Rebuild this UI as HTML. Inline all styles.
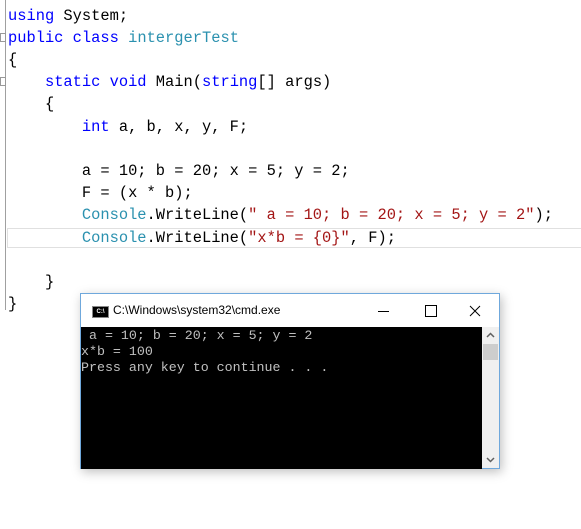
<!DOCTYPE html>
<html><head><style>
body{margin:0;width:581px;height:529px;background:#fff;position:relative;overflow:hidden;font-family:"Liberation Mono",monospace}
.l{position:absolute;left:8px;font-size:15.4px;white-space:pre;color:#000;line-height:22px;height:22px}
.k{color:#0000ff}.t{color:#2b91af}.s{color:#a31515}
.cmd{position:absolute;left:80px;top:293px;width:418px;height:174px;background:#fff;border:1px solid #6fa8dc;box-shadow:2px 3px 10px rgba(0,0,0,.25)}
.con{position:absolute;left:0;top:33px;width:401px;height:141px;background:#000;color:#c0c0c0;font-size:13.3px;line-height:16px;white-space:pre;padding-top:1px}
</style></head><body>
<div style="position:absolute;left:5px;top:0;width:1px;height:310px;background:#a0a0a0"></div>
<div style="position:absolute;left:0;top:33px;width:6px;height:9px;border:1px solid #999;background:#fff;box-sizing:border-box"></div>
<div style="position:absolute;left:0;top:77px;width:6px;height:9px;border:1px solid #999;background:#fff;box-sizing:border-box"></div>
<div style="position:absolute;left:7px;top:228px;width:580px;height:20px;border:1px solid #e0e0e0;box-sizing:border-box"></div>
<div class="l" style="top:-17px;color:#008000">//</div>
<div class="l" style="top:5px"><span class="k">using</span> System;</div>
<div class="l" style="top:27px"><span class="k">public class</span> <span class="t">intergerTest</span></div>
<div class="l" style="top:49px">{</div>
<div class="l" style="top:71px">    <span class="k">static void</span> Main(<span class="k">string</span>[] args)</div>
<div class="l" style="top:93px">    {</div>
<div class="l" style="top:116px">        <span class="k">int</span> a, b, x, y, F;</div>
<div class="l" style="top:160px">        a = 10; b = 20; x = 5; y = 2;</div>
<div class="l" style="top:182px">        F = (x * b);</div>
<div class="l" style="top:204px">        <span class="t">Console</span>.WriteLine(<span class="s">" a = 10; b = 20; x = 5; y = 2"</span>);</div>
<div class="l" style="top:227px">        <span class="t">Console</span>.WriteLine(<span class="s">"x*b = {0}"</span>, F);</div>
<div class="l" style="top:271px">    }</div>
<div class="l" style="top:293px">}</div>
<div class="cmd">
<div style="position:absolute;left:11px;top:12px;width:15px;height:10px;background:#000;border:1px solid #888;color:#fff;font:bold 6px 'Liberation Sans';line-height:10px;text-align:center">C:\</div>
<div style="position:absolute;left:32px;top:9px;font:12px 'Liberation Sans',sans-serif;color:#000">C:\Windows\system32\cmd.exe</div>
<div style="position:absolute;left:297px;top:17px;width:11px;height:1px;background:#000"></div>
<div style="position:absolute;left:344px;top:11px;width:10px;height:10px;border:1px solid #000"></div>
<svg style="position:absolute;left:388px;top:11px" width="12" height="12"><path d="M1 1L11 11M11 1L1 11" stroke="#000" stroke-width="1"/></svg>
<div class="con"> a = 10; b = 20; x = 5; y = 2
x*b = 100
Press any key to continue . . .</div>
<div style="position:absolute;left:401px;top:33px;width:17px;height:141px;background:#f0f0f0">
<svg style="position:absolute;left:4px;top:5px" width="9" height="6"><path d="M1 5L4.5 1.5L8 5" stroke="#606060" fill="none" stroke-width="1.5"/></svg>
<div style="position:absolute;left:1px;top:17px;width:15px;height:16px;background:#cdcdcd"></div>
<svg style="position:absolute;left:4px;top:130px" width="9" height="6"><path d="M1 1L4.5 4.5L8 1" stroke="#606060" fill="none" stroke-width="1.5"/></svg>
</div>
</div>
</body></html>
